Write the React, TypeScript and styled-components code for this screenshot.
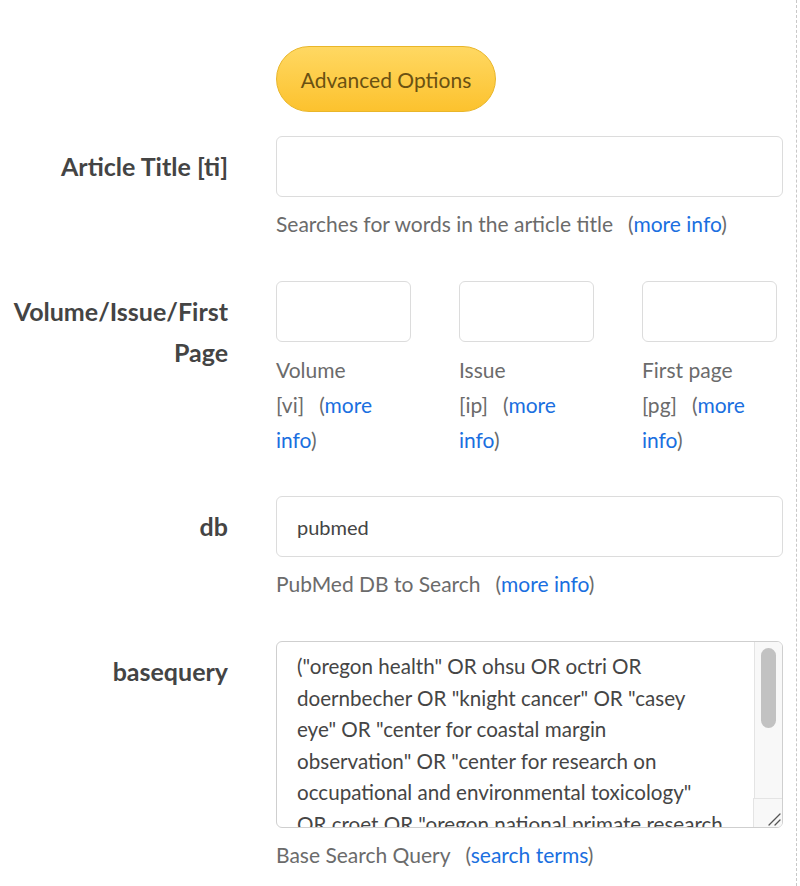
import React from "react";
import styled, { createGlobalStyle } from "styled-components";

const FONT = `"Lato", "Open Sans", sans-serif`;

const GlobalStyle = createGlobalStyle`
  html, body {
    margin: 0;
    padding: 0;
    background: #fff;
  }
  body {
    font-family: ${FONT};
  }
`;

const Page = styled.div`
  width: 797px;
  min-height: 886px;
  border-right: 1px dashed #c8c8c8;
  box-sizing: border-box;
  padding-top: 46px;
`;

const Form = styled.div`
  width: 783px;
  display: grid;
  grid-template-columns: 228px 1fr;
  column-gap: 48px;
`;

const Label = styled.div`
  text-align: right;
  font-size: 25px;
  font-weight: 700;
  color: #444;
  line-height: 41px;
  padding-top: 10px;
`;

const Field = styled.div<{ $gap?: number }>`
  display: flex;
  flex-direction: column;
  margin-bottom: ${(p) => p.$gap ?? 42}px;
`;

const AdvancedButton = styled.button`
  width: 220px;
  height: 66px;
  border-radius: 33px;
  border: 1px solid #e9b62a;
  background: linear-gradient(to bottom, #ffd862, #fcc22e);
  color: #6a5112;
  font-family: ${FONT};
  font-size: 21px;
  cursor: pointer;
`;

const TextInput = styled.input`
  box-sizing: border-box;
  width: 100%;
  height: 61px;
  border: 1px solid #dcdcdc;
  border-radius: 6px;
  padding: 0 20px;
  font-family: ${FONT};
  font-size: 20px;
  color: #444;
  outline: none;
`;

const SmallInput = styled(TextInput)`
  width: 135px;
`;

const Help = styled.div`
  margin-top: 12px;
  font-size: 21px;
  line-height: 30px;
  color: #6b6b6b;
`;

const Link = styled.a`
  color: #1a6fe0;
  text-decoration: none;
  margin-left: 15px;
`;

const Paren = styled.span`
  color: #6b6b6b;
`;

const Triple = styled.div`
  display: grid;
  grid-template-columns: repeat(3, 135px);
  column-gap: 48px;
`;

const SubField = styled.div`
  display: flex;
  flex-direction: column;
`;

const SubHelp = styled.div`
  margin-top: 10px;
  font-size: 21px;
  line-height: 35px;
  color: #6b6b6b;
`;

const AreaWrap = styled.div`
  position: relative;
  height: 187px;
`;

const Area = styled.textarea`
  box-sizing: border-box;
  display: block;
  width: 100%;
  height: 100%;
  border: 1px solid #cfcfcf;
  border-radius: 6px;
  padding: 9px 30px 0 20px;
  font-family: ${FONT};
  font-size: 20.6px;
  line-height: 31.6px;
  color: #454545;
  white-space: pre-wrap;
  resize: none;
  outline: none;
  overflow: hidden;
`;

/* painted scrollbar, sits over the textarea's right edge */
const Track = styled.div`
  position: absolute;
  top: 1px;
  right: 1px;
  bottom: 1px;
  width: 27px;
  border-left: 1px solid #e4e4e4;
  background: #f8f8f8;
  border-radius: 0 5px 5px 0;
`;

const Thumb = styled.div`
  position: absolute;
  top: 6px;
  left: 6px;
  width: 15px;
  height: 80px;
  border-radius: 8px;
  background: #c2c2c2;
`;

const Corner = styled.div`
  position: absolute;
  left: -2px;
  right: 0;
  bottom: 0;
  height: 28px;
  border-top: 1px solid #e4e4e4;
  border-left: 1px solid #e4e4e4;
  background: #f8f8f8;
  border-radius: 0 0 5px 0;
  display: flex;
  align-items: flex-end;
  justify-content: flex-end;
`;

// lines as the field wraps them
const QUERY = [
  '("oregon health" OR ohsu OR octri OR',
  'doernbecher OR "knight cancer" OR "casey',
  'eye" OR "center for coastal margin',
  'observation" OR "center for research on',
  'occupational and environmental toxicology"',
  'OR croet OR "oregon national primate research',
  'center" OR onprc OR "vollum institute" OR',
  '"oregon institute of occupational health sciences")',
].join("\n");

function HelpLink({ text }: { text: string }) {
  return (
    <Link href="#">
      <Paren>(</Paren>
      {text}
      <Paren>)</Paren>
    </Link>
  );
}

function Grip() {
  return (
    <svg width="16" height="16" viewBox="0 0 16 16">
      <path d="M3 14 L14 3 M9 14 L14 9" stroke="#555" strokeWidth="1.3" strokeLinecap="round" />
    </svg>
  );
}

const subs = [
  { name: "Volume", tag: "[vi]" },
  { name: "Issue", tag: "[ip]" },
  { name: "First page", tag: "[pg]" },
];

export default function App() {
  return (
    <>
      <GlobalStyle />
      <Page>
        <Form>
          <div />
          <Field $gap={24}>
            <div>
              <AdvancedButton>Advanced Options</AdvancedButton>
            </div>
          </Field>

          <Label>Article Title [ti]</Label>
          <Field>
            <TextInput />
            <Help>
              Searches for words in the article title
              <HelpLink text="more info" />
            </Help>
          </Field>

          <Label>
            Volume/Issue/First
            <br />
            Page
          </Label>
          <Field $gap={39}>
            <Triple>
              {subs.map((s) => (
                <SubField key={s.name}>
                  <SmallInput />
                  <SubHelp>
                    {s.name}
                    <br />
                    {s.tag}
                    <HelpLink text="more info" />
                  </SubHelp>
                </SubField>
              ))}
            </Triple>
          </Field>

          <Label>db</Label>
          <Field>
            <TextInput defaultValue="pubmed" />
            <Help>
              PubMed DB to Search
              <HelpLink text="more info" />
            </Help>
          </Field>

          <Label>basequery</Label>
          <Field $gap={0}>
            <AreaWrap>
              <Area defaultValue={QUERY} />
              <Track>
                <Thumb />
                <Corner>
                  <Grip />
                </Corner>
              </Track>
            </AreaWrap>
            <Help>
              Base Search Query
              <HelpLink text="search terms" />
            </Help>
          </Field>
        </Form>
      </Page>
    </>
  );
}
